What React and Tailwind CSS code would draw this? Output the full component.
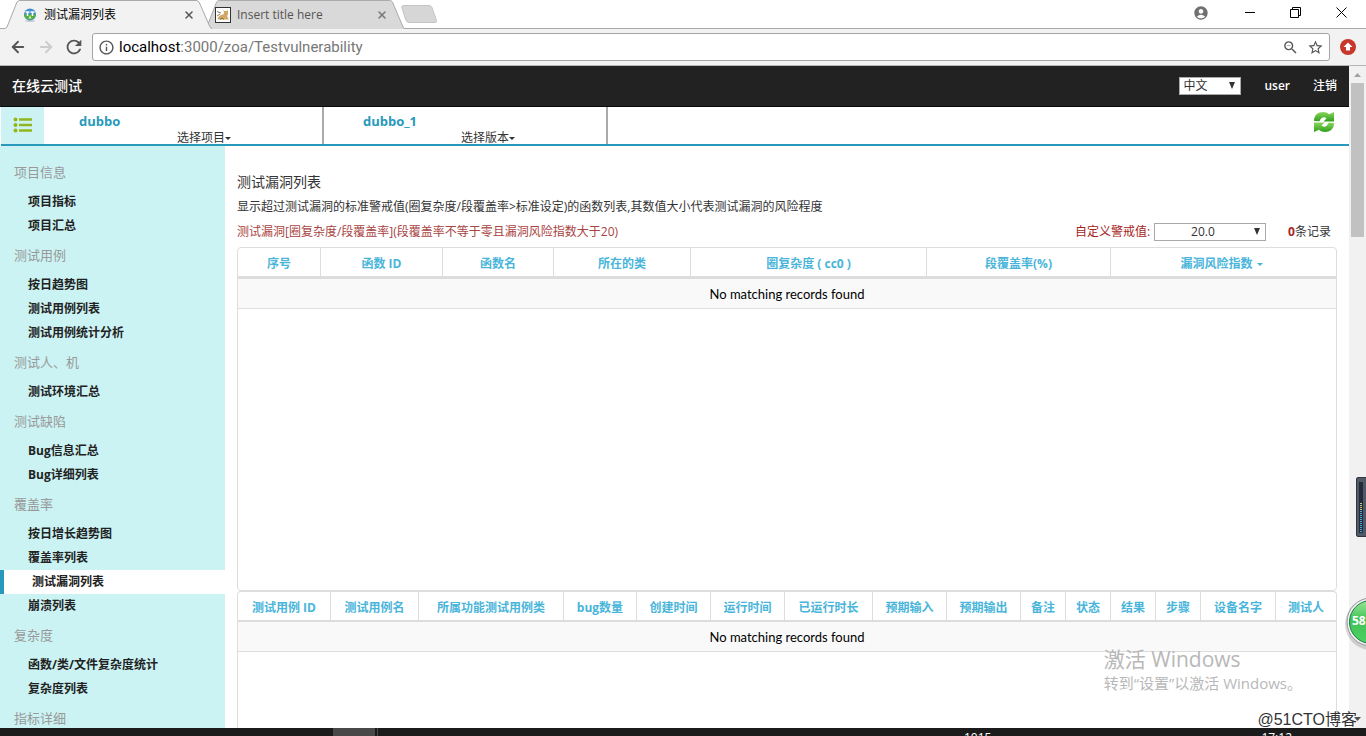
import { useState } from 'react';
import { X, ArrowLeft, ArrowRight } from 'lucide-react';
import { MdAccountCircle, MdInfoOutline, MdRefresh, MdStarBorder, MdZoomOut } from 'react-icons/md';

const menu = [
  { title: '项目信息', items: ['项目指标', '项目汇总'] },
  { title: '测试用例', items: ['按日趋势图', '测试用例列表', '测试用例统计分析'] },
  { title: '测试人、机', items: ['测试环境汇总'] },
  { title: '测试缺陷', items: ['Bug信息汇总', 'Bug详细列表'] },
  { title: '覆盖率', items: ['按日增长趋势图', '覆盖率列表', '测试漏洞列表', '崩溃列表'] },
  { title: '复杂度', items: ['函数/类/文件复杂度统计', '复杂度列表'] },
  { title: '指标详细', items: [] },
];

const leakColumns = [
  { label: '序号', width: 'w-[83px]' },
  { label: '函数 ID', width: 'w-[122px]' },
  { label: '函数名', width: 'w-[111px]' },
  { label: '所在的类', width: 'w-[137px]' },
  { label: '圈复杂度 ( cc0 )', width: 'w-[236px]' },
  { label: '段覆盖率(%)', width: 'w-[184px]' },
  { label: '漏洞风险指数', width: 'w-[225px]', sorted: true },
];

const caseColumns = [
  { label: '测试用例 ID', width: 'w-[93px]' },
  { label: '测试用例名', width: 'w-[88px]' },
  { label: '所属功能测试用例类', width: 'w-[145px]' },
  { label: 'bug数量', width: 'w-[73px]' },
  { label: '创建时间', width: 'w-[74px]' },
  { label: '运行时间', width: 'w-[74px]' },
  { label: '已运行时长', width: 'w-[88px]' },
  { label: '预期输入', width: 'w-[74px]' },
  { label: '预期输出', width: 'w-[74px]' },
  { label: '备注', width: 'w-[45px]' },
  { label: '状态', width: 'w-[45px]' },
  { label: '结果', width: 'w-[45px]' },
  { label: '步骤', width: 'w-[45px]' },
  { label: '设备名字', width: 'w-[75px]' },
  { label: '测试人', width: 'w-[60px]' },
];

function Caret({ className = '' }) {
  return (
    <svg viewBox="0 0 6 3" className={`inline-block w-[6px] h-[3px] align-middle ${className}`} fill="currentColor">
      <path d="M0 0h6L3 3z" />
    </svg>
  );
}

function TabShape({ fill }) {
  return (
    <svg viewBox="0 0 208 29" preserveAspectRatio="none" className="absolute inset-0 w-full h-full -z-10">
      <path d="M0 29 L3 27 L13 2 Q14 .5 16 .5 H192 Q194 .5 195 2 L206 27 L208 29 Z" fill={fill} />
      <path
        d="M0 28.500 Q2 28.500 3 27 L13 2 Q14 .5 16 .5 H192 Q194 .5 195 2 L206 27 Q206.500 28.500 208 28.500"
        fill="none"
        stroke="#a9a9a9"
      />
    </svg>
  );
}

function GlobeIcon() {
  return (
    <svg viewBox="0 0 14 14" className="w-[14px] h-[14px]">
      <ellipse cx="7" cy="13" rx="5" ry="1" fill="#ccc" />
      <circle cx="7" cy="6.500" r="6" fill="#3f8fd0" />
      <path d="M1.200 6.500h11.600a6 6 0 0 1-11.600 1z" fill="#55b238" />
      <path d="M2.500 4h4M4.500 4v4M7.500 4h4M9.500 4v4" stroke="#fff" strokeWidth="1.500" />
      <path d="M5.500 10.500l1.500-3 1.500 3z" fill="#d9f2c9" />
    </svg>
  );
}

function TomcatIcon() {
  return (
    <svg viewBox="0 0 16 16" className="w-4 h-4">
      <rect x=".5" y=".5" width="15" height="15" fill="#fff" stroke="#333" />
      <path d="M8.500 3l1 1h2L13 3v4.500L12 9l2 3.500H3L2.500 11 5 8.500 9 7z" fill="#d2a868" />
      <path d="M2 9l3-2M2 4.500l4 1.500M5 12.500l2-1.500 2 1.500" stroke="#6d5837" strokeWidth=".8" fill="none" />
    </svg>
  );
}

function BrowserTabs() {
  return (
    <div className="flex h-[29px] shrink-0 items-stretch bg-white border-b border-[#a9a9a9]">
      <div className="relative isolate z-10 -mb-px ml-1 flex w-[208px] items-center pl-[19px] pr-[17px]">
        <TabShape fill="#f2f2f2" />
        <GlobeIcon />
        <span className="ml-[7px] flex-1 text-xs text-black">测试漏洞列表</span>
        <button type="button" aria-label="Close tab" className="text-[#555]">
          <X className="w-3 h-3" strokeWidth={3} />
        </button>
      </div>
      <div className="relative isolate -ml-2 -mb-px flex w-[201px] items-center pl-[11px] pr-[17px]">
        <TabShape fill="#d9d9d9" />
        <TomcatIcon />
        <span className="ml-[6px] flex-1 text-xs text-[#555]">Insert title here</span>
        <button type="button" aria-label="Close tab" className="text-[#777]">
          <X className="w-3 h-3" strokeWidth={3} />
        </button>
      </div>
      <button type="button" aria-label="New tab" className="-ml-1 self-center">
        <svg viewBox="0 0 36 18" className="w-9 h-[18px]">
          <path d="M3 .5h25q2 0 3 2l4.500 13q.5 2-1.500 2H8q-2 0-3-2L.8 2.500Q.5.5 3 .5z" fill="#d6d6d6" stroke="#c4c4c4" />
        </svg>
      </button>
      <div className="ml-auto flex items-center pr-[19px] pb-[3px] text-black">
        <MdAccountCircle className="w-4 h-4 text-[#707070]" />
        <button type="button" aria-label="Minimize" className="ml-9">
          <svg viewBox="0 0 11 11" className="w-[11px] h-[11px]" stroke="#000">
            <path d="M0 5.500h10" />
          </svg>
        </button>
        <button type="button" aria-label="Restore" className="ml-[34px]">
          <svg viewBox="0 0 11 11" className="w-[11px] h-[11px]" fill="none" stroke="#000">
            <path d="M.5 2.500h8v8h-8zM2.500 2.500v-2h8v8h-2" />
          </svg>
        </button>
        <button type="button" aria-label="Close" className="ml-[35px]">
          <svg viewBox="0 0 11 11" className="w-[11px] h-[11px]" stroke="#000">
            <path d="M.5.5l10 10M10.500.5l-10 10" />
          </svg>
        </button>
      </div>
    </div>
  );
}

function AddressBar() {
  return (
    <div className="flex h-[37px] shrink-0 items-center border-b border-[#b6b6b6] bg-[#f2f2f2] pl-[9px] pr-[10px] text-[#555]">
      <button type="button" aria-label="Back">
        <ArrowLeft className="w-[18px] h-[18px]" strokeWidth={2.5} />
      </button>
      <button type="button" aria-label="Forward" className="ml-[10px] text-[#ccc]">
        <ArrowRight className="w-[18px] h-[18px]" strokeWidth={2.5} />
      </button>
      <button type="button" aria-label="Reload" className="ml-2">
        <MdRefresh className="w-[22px] h-[22px]" />
      </button>
      <div className="ml-[7px] flex h-7 flex-1 items-center rounded-[3px] border border-[#a5a5a5] bg-white px-[5px]">
        <MdInfoOutline className="w-[17px] h-[17px]" />
        <span className="ml-1 flex-1 font-['Roboto',sans-serif] text-[15px] text-[#777]">
          <span className="text-black">localhost</span>:3000/zoa/Testvulnerability
        </span>
        <MdZoomOut className="w-[17px] h-[17px]" />
        <MdStarBorder className="ml-2 w-[17px] h-[17px]" />
      </div>
      <svg viewBox="0 0 16 16" className="ml-[10px] w-4 h-4">
        <circle cx="8" cy="8" r="8" fill="#c8372b" />
        <path d="M8 3.500L12.500 8H10v3.500H6V8H3.500z" fill="#fff" />
      </svg>
    </div>
  );
}

// dropdown triangle drawn over the flat selects
function Arrow() {
  return (
    <svg viewBox="0 0 6 7" className="pointer-events-none absolute right-[6px] top-[5px] w-[6px] h-[7px]" fill="#333">
      <path d="M0 0h6L3 7z" />
    </svg>
  );
}

function Navbar() {
  return (
    <header className="flex h-[41px] shrink-0 items-center border-b border-[#080808] bg-[#222] px-3 text-xs text-white">
      <a href="#home" className="text-sm font-medium">在线云测试</a>
      <div className="relative ml-auto flex">
        <select
          aria-label="语言"
          className="h-[18px] w-[62px] appearance-none border border-[#a9a9a9] bg-white pl-[3px] text-xs leading-4 text-[#333]"
        >
          <option>中文</option>
          <option>English</option>
        </select>
        <Arrow />
      </div>
      <a href="#user" className="ml-[23px] font-semibold">user</a>
      <a href="#logout" className="ml-[23px] font-medium">注销</a>
    </header>
  );
}

function ListIcon() {
  return (
    <svg viewBox="0 0 20 16" className="w-5 h-4" fill="currentColor">
      <circle cx="2.500" cy="2.500" r="2" />
      <circle cx="2.500" cy="8" r="2" />
      <circle cx="2.500" cy="13.500" r="2" />
      <path d="M6 1.200h13v2.500H6zM6 6.800h13v2.500H6zM6 12.300h13v2.500H6z" />
    </svg>
  );
}

function RefreshIcon() {
  return (
    <svg viewBox="0 0 22 22" className="w-[22px] h-[22px]">
      <defs>
        <linearGradient id="leaf" x1="0" y1="0" x2="0" y2="1">
          <stop offset="0" stopColor="#8bd65c" />
          <stop offset="1" stopColor="#2f9e1c" />
        </linearGradient>
      </defs>
      <path d="M1 10C1 4 5 1 10 1c2.500 0 4.500.8 6 2.200L21 1v9.500H10.500l3-3C11.500 5.500 8 6 6.500 10.300z" fill="url(#leaf)" />
      <path d="M21 12c0 6-4 9-9 9-2.500 0-4.500-.8-6-2.200L1 21v-9.500h10.500l-3 3c2 2 5.500 1.500 7-2.800z" fill="url(#leaf)" />
    </svg>
  );
}

function ProjectBar() {
  return (
    <div className="ml-px flex h-[39px] shrink-0 items-stretch border-b-2 border-[#2899bb] text-xs text-[#333]">
      <button type="button" aria-label="菜单" className="flex w-[43px] items-center justify-center bg-[#ccf2f3] pb-px text-[#92b71c]">
        <ListIcon />
      </button>
      <div className="w-[280px] border-r-2 border-[#aaa] pl-[35px]">
        <div className="pt-1 text-[13px] font-bold leading-5 text-[#2899bb]">dubbo</div>
        <button type="button" className="ml-[98px] block leading-[14px]">
          选择项目<Caret />
        </button>
      </div>
      <div className="w-[284px] border-r-2 border-[#aaa] pl-[39px]">
        <div className="pt-1 text-[13px] font-bold leading-5 text-[#2899bb]">dubbo_1</div>
        <button type="button" className="ml-[98px] block leading-[14px]">
          选择版本<Caret />
        </button>
      </div>
      <button type="button" aria-label="刷新" className="ml-auto mr-[14px] pb-[7px]">
        <RefreshIcon />
      </button>
    </div>
  );
}

function Sidebar({ active, onSelect }) {
  return (
    <nav className="w-[225px] shrink-0 overflow-hidden bg-[#cbf3f3] pt-[9px]">
      {menu.map((group) => (
        <section key={group.title}>
          <h2 className="pb-px pl-[14px] text-[13px] leading-[34px] text-[#999]">{group.title}</h2>
          <ul>
            {group.items.map((item) => (
              <li key={item}>
                <a
                  href="#list"
                  onClick={() => onSelect(item)}
                  className={`block pl-7 text-xs font-bold leading-6 text-[#222] ${
                    item === active ? 'border-l-4 border-[#2899bb] bg-white' : ''
                  }`}
                >
                  {item}
                </a>
              </li>
            ))}
          </ul>
        </section>
      ))}
    </nav>
  );
}

function DataTable({ columns, headClass }) {
  return (
    <table className="w-full table-fixed border-separate border-spacing-0 text-center">
      <thead>
        <tr>
          {columns.map((col) => (
            <th
              key={col.label}
              className={`${col.width} ${headClass} whitespace-nowrap border-r border-[#ddd] p-0 pt-1 text-xs font-bold text-[#49b5da] last:border-r-0`}
            >
              {col.label}
              {col.sorted && <Caret className="mx-1" />}
            </th>
          ))}
        </tr>
      </thead>
      <tbody>
        <tr>
          <td
            colSpan={columns.length}
            className="h-[30px] border-b border-[#ddd] bg-[#f9f9f9] p-0 font-['Lato',sans-serif] text-[13px] leading-5 text-black"
          >
            No matching records found
          </td>
        </tr>
      </tbody>
    </table>
  );
}

function Scrollbar() {
  return (
    <div className="flex w-[17px] shrink-0 flex-col items-center bg-[#f1f1f1]">
      <svg viewBox="0 0 7 4" className="mt-[7px] w-[7px] h-1" fill="#a3a3a3">
        <path d="M3.500 0L7 4H0z" />
      </svg>
      <div className="mt-[6px] h-[154px] w-[13px] bg-[#c1c1c1]" />
      <svg viewBox="0 0 7 4" className="mt-auto mb-[7px] w-[7px] h-1" fill="#505050">
        <path d="M0 0h7L3.500 4z" />
      </svg>
    </div>
  );
}

function FloatingWidgets() {
  return (
    <>
      <div className="pointer-events-none absolute bottom-[41px] right-[64px] text-[#b8b8b8]">
        <p className="text-[21px] leading-6">激活 Windows</p>
        <p className="text-[15px] leading-6">转到“设置”以激活 Windows。</p>
      </div>
      <p className="pointer-events-none absolute bottom-[6px] right-[9px] font-['Liberation_Sans','Noto_Sans_CJK_SC',sans-serif] text-base leading-5 text-[#333] [text-shadow:1px_1px_0_#fff]">
        @51CTO博客
      </p>
      <svg viewBox="0 0 10 60" className="absolute right-0 top-[477px] w-[10px] h-[60px]">
        <rect x=".5" y=".5" width="14" height="59" rx="1.500" fill="#4f5a66" stroke="#33363f" />
        <rect x="3" y="5" width="4" height="51" fill="#252a3c" />
        <path d="M5 26v7" stroke="#c3cf7a" strokeWidth="2" strokeDasharray="1 1" />
        <path d="M5 34v21" stroke="#45b0e0" strokeWidth="2" strokeDasharray="1 1" />
      </svg>
      <svg viewBox="0 0 22 60" className="absolute right-0 top-[593px] w-[22px] h-[60px]">
        <defs>
          <linearGradient id="ball" x1="0" y1="0" x2="0" y2="1">
            <stop offset="0" stopColor="#9be796" />
            <stop offset=".45" stopColor="#3fc257" />
            <stop offset="1" stopColor="#4fd163" />
          </linearGradient>
        </defs>
        <circle cx="27" cy="31" r="26" fill="#000" opacity=".15" />
        <circle cx="27" cy="29" r="24" fill="#f1f1f1" stroke="#999" />
        <circle cx="27" cy="29" r="21.500" fill="url(#ball)" stroke="#16804a" />
        <text x="8" y="32" fontSize="12" fontWeight="700" fill="#fff" fontFamily="Open Sans, sans-serif">58</text>
      </svg>
    </>
  );
}

function Taskbar() {
  return (
    <footer className="flex h-2 shrink-0 overflow-hidden bg-[#1b1b1b] text-xs leading-3 text-white">
      <div className="ml-[333px] w-[42px] bg-[#484848]" />
      <div className="ml-[2px] w-px bg-[#484848]" />
      <span className="ml-auto mr-[270px] pt-1">1015</span>
      <span className="mr-[74px] pt-1">17:12</span>
    </footer>
  );
}

function App() {
  const [active, setActive] = useState('测试漏洞列表');
  const [limit, setLimit] = useState('20.0');

  return (
    <div className="relative flex h-screen flex-col overflow-hidden bg-white font-['Open_Sans','Noto_Sans_CJK_SC',sans-serif]">
      <BrowserTabs />
      <AddressBar />
      <div className="flex min-h-0 flex-1">
        <div className="flex min-w-0 flex-1 flex-col">
          <Navbar />
          <ProjectBar />
          <div className="flex min-h-0 flex-1">
            <Sidebar active={active} onSelect={setActive} />
            <main className="flex min-w-0 flex-1 flex-col px-3 pt-[26px] text-xs text-[#333]">
              <h1 className="text-sm leading-5">测试漏洞列表</h1>
              <p className="mt-[5px] leading-5">
                显示超过测试漏洞的标准警戒值(圈复杂度/段覆盖率&gt;标准设定)的函数列表,其数值大小代表测试漏洞的风险程度
              </p>
              <div className="my-[5px] flex h-5 items-center pr-[6px]">
                <p className="text-[#a94442]">测试漏洞[圈复杂度/段覆盖率](段覆盖率不等于零且漏洞风险指数大于20)</p>
                <label htmlFor="limit" className="ml-auto text-[#a52422]">自定义警戒值:</label>
                <div className="relative ml-1 flex">
                  <select
                    id="limit"
                    value={limit}
                    onChange={(e) => setLimit(e.target.value)}
                    className="h-[18px] w-28 appearance-none border border-[#a9a9a9] bg-white pl-9 text-xs leading-4"
                  >
                    <option>10.0</option>
                    <option>20.0</option>
                    <option>30.0</option>
                  </select>
                  <Arrow />
                </div>
                <p className="ml-[22px]">
                  <b className="text-[#a52422]">0</b>条记录
                </p>
              </div>
              <div className="h-[344px] shrink-0 overflow-hidden rounded-sm border border-[#ddd]">
                <DataTable columns={leakColumns} headClass="h-[31px] border-b-3" />
              </div>
              <div className="min-h-0 flex-1 overflow-hidden rounded-t-sm border border-b-0 border-[#ddd]">
                <DataTable columns={caseColumns} headClass="h-[30px] border-b-2" />
              </div>
            </main>
          </div>
        </div>
        <Scrollbar />
      </div>
      <Taskbar />
      <FloatingWidgets />
    </div>
  );
}

export default App;
